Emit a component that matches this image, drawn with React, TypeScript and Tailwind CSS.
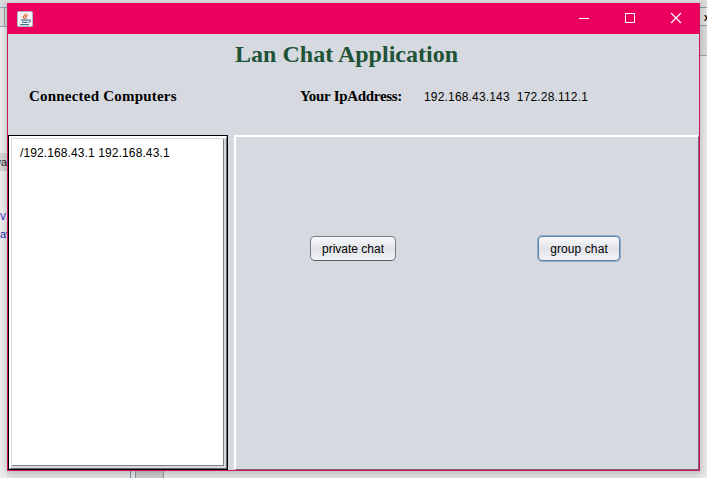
import React from "react";

const serif = "font-['Liberation_Serif',serif] font-bold whitespace-nowrap";
const sans = "font-['Liberation_Sans',sans-serif] text-[12px] leading-[14px] whitespace-nowrap";

function JavaIcon() {
  return (
    <svg width="16" height="16" viewBox="0 0 16 16" fill="none">
      <rect x="0.5" y="0.5" width="15" height="15" rx="1" fill="#f3f3f5" stroke="#aeb9c6" />
      <path d="M9 2.4c.6 1.5-3.2 2.4-2.6 4 .2.7 1 1 1.1 1.7M10.8 4.4C8.8 5.2 8 5.8 8.9 6.8c.4.5.2.9-.3 1.3" stroke="#e4682f" strokeWidth="1.2" />
      <path d="M4 9.2h7M5 11.3h5.4M3 13.7h9M11.3 8.9c2.8-.6 2.6 2 0 2.4" stroke="#4d7898" strokeWidth="1.2" />
    </svg>
  );
}

function TitleBar() {
  return (
    <header className="flex h-[31px] shrink-0 items-center justify-between bg-[#eb005e] pl-[9px] text-white">
      <JavaIcon />
      <div className="flex h-[30px] self-start">
        <div className="flex w-[46px] items-center justify-center">
          <svg width="12" height="12" stroke="currentColor"><path d="M1 6.5h10" /></svg>
        </div>
        <div className="flex w-[45px] items-center justify-center">
          <svg width="12" height="12" stroke="currentColor" fill="none"><rect x="1.5" y="1.5" width="9" height="9" /></svg>
        </div>
        <div className="flex w-[47px] items-center justify-center">
          <svg width="12" height="12" stroke="currentColor" strokeWidth="1.2"><path d="M1 1l10 10M11 1L1 11" /></svg>
        </div>
      </div>
    </header>
  );
}

function Backdrop() {
  return (
    <div className={`${sans} flex h-full justify-between text-[#171bb0]`}>
      <div className="w-[7px] overflow-hidden bg-[#eeeeef]">
        <div className="h-[7px] bg-[#dcdcdc]" />
        <div className="h-5 border-y border-[#8fa9ae] bg-[#dedede]"><div className="ml-1 h-full w-px bg-[#9b9b9b]" /></div>
        <div className="mt-[126px] flex h-[18px] items-center justify-end bg-[#d5d5d5] text-[11px] text-[#222]">va</div>
        <div className="mt-[38px] text-[#3d42be]">v</div>
        <div className="mt-[4px] text-[11px]">av</div>
      </div>
      <div className="mt-[471px] mr-auto ml-[123px] flex h-[7px] w-[34px] border-l border-[#7b8fa8]">
        <div className="w-1" /><div className="w-[29px] border-x border-[#8c9bac] bg-[#c9c9c8]" />
      </div>
      <div className="w-[7px] overflow-hidden bg-[#e8e8e8] text-black">
        <div className="h-[7px] bg-[#dcdcdc]" />
        <div className="flex h-[19px] items-center border-y border-[#8fa0a9] bg-[#e3e3e3] pt-[3px] pl-[4px] text-[10px] font-bold">x</div>
        <div className="h-[30px] border-b border-[#9ba3a8] bg-[#d9d9da]" />
      </div>
    </div>
  );
}

export default function App() {
  return (
    <div className="relative h-[478px] w-[707px] overflow-hidden bg-[#e3e3e3]">
      <Backdrop />
      <div className="absolute top-[3px] left-[7px] flex h-[468px] w-[693px] flex-col border border-t-0 border-[#ca1761] bg-[#d6d9df] shadow-[0_1px_7px_1px_rgba(0,0,0,0.2)]">
        <TitleBar />
        <div className="h-[101px] shrink-0">
          <h1 className={`${serif} pt-[6px] pl-[227px] text-[24px] leading-[28px] tracking-[0.02px] text-[#205337]`}>Lan Chat Application</h1>
          <div className="mt-[19px] flex h-[18px] items-center text-black">
            <h2 className={`${serif} w-[271px] pl-[21px] text-[15px] leading-[18px] tracking-[0.21px]`}>Connected Computers</h2>
            <h2 className={`${serif} w-[145px] pl-[21px] text-[15px] leading-[18px] tracking-[-0.3px]`}>Your IpAddress:</h2>
            <span className={`${sans} pt-[2px] tracking-[0.17px] whitespace-pre`}>192.168.43.143  172.28.112.1</span>
          </div>
        </div>
        <main className="flex h-[335px]">
          <aside className="w-[220px] border border-black bg-white">
            <div className="h-full border-t-2 border-r border-b border-l-2 border-t-white border-r-[#646b70] border-b-[#646b70] border-l-white">
              <div className="h-full border-t border-r-2 border-b-2 border-l border-[#d6d9df]">
                <div className="h-full border-r border-b border-[#7d8186] bg-white pt-[7px] pl-[8px] text-black">
                  <div className={`${sans} tracking-[0.11px]`}>/192.168.43.1 192.168.43.1</div>
                </div>
              </div>
            </div>
          </aside>
          <section className="ml-[6px] flex flex-1 items-start border-t-2 border-r border-b border-l-2 border-t-white border-r-[#80606f] border-b-[#80606f] border-l-white pt-[99px] pl-[74px] text-black">
            <button className={`${sans} flex h-[25px] w-[86px] items-center justify-center rounded-[5px] border border-[#767b82] border-b-[#555c66] bg-gradient-to-b from-[#fafafc] via-[#e2e4e9] to-[#f2f3f6]`}>private chat</button>
            <button className={`${sans} ml-[142px] flex h-[25px] w-[82px] items-center justify-center rounded-[4px] border border-[#5f7f9e] bg-gradient-to-b from-[#fafafc] via-[#e2e4e9] to-[#f2f3f6] tracking-[0.1px] shadow-[0_0_0_1px_#8eafcd]`}>group chat</button>
          </section>
        </main>
      </div>
    </div>
  );
}
